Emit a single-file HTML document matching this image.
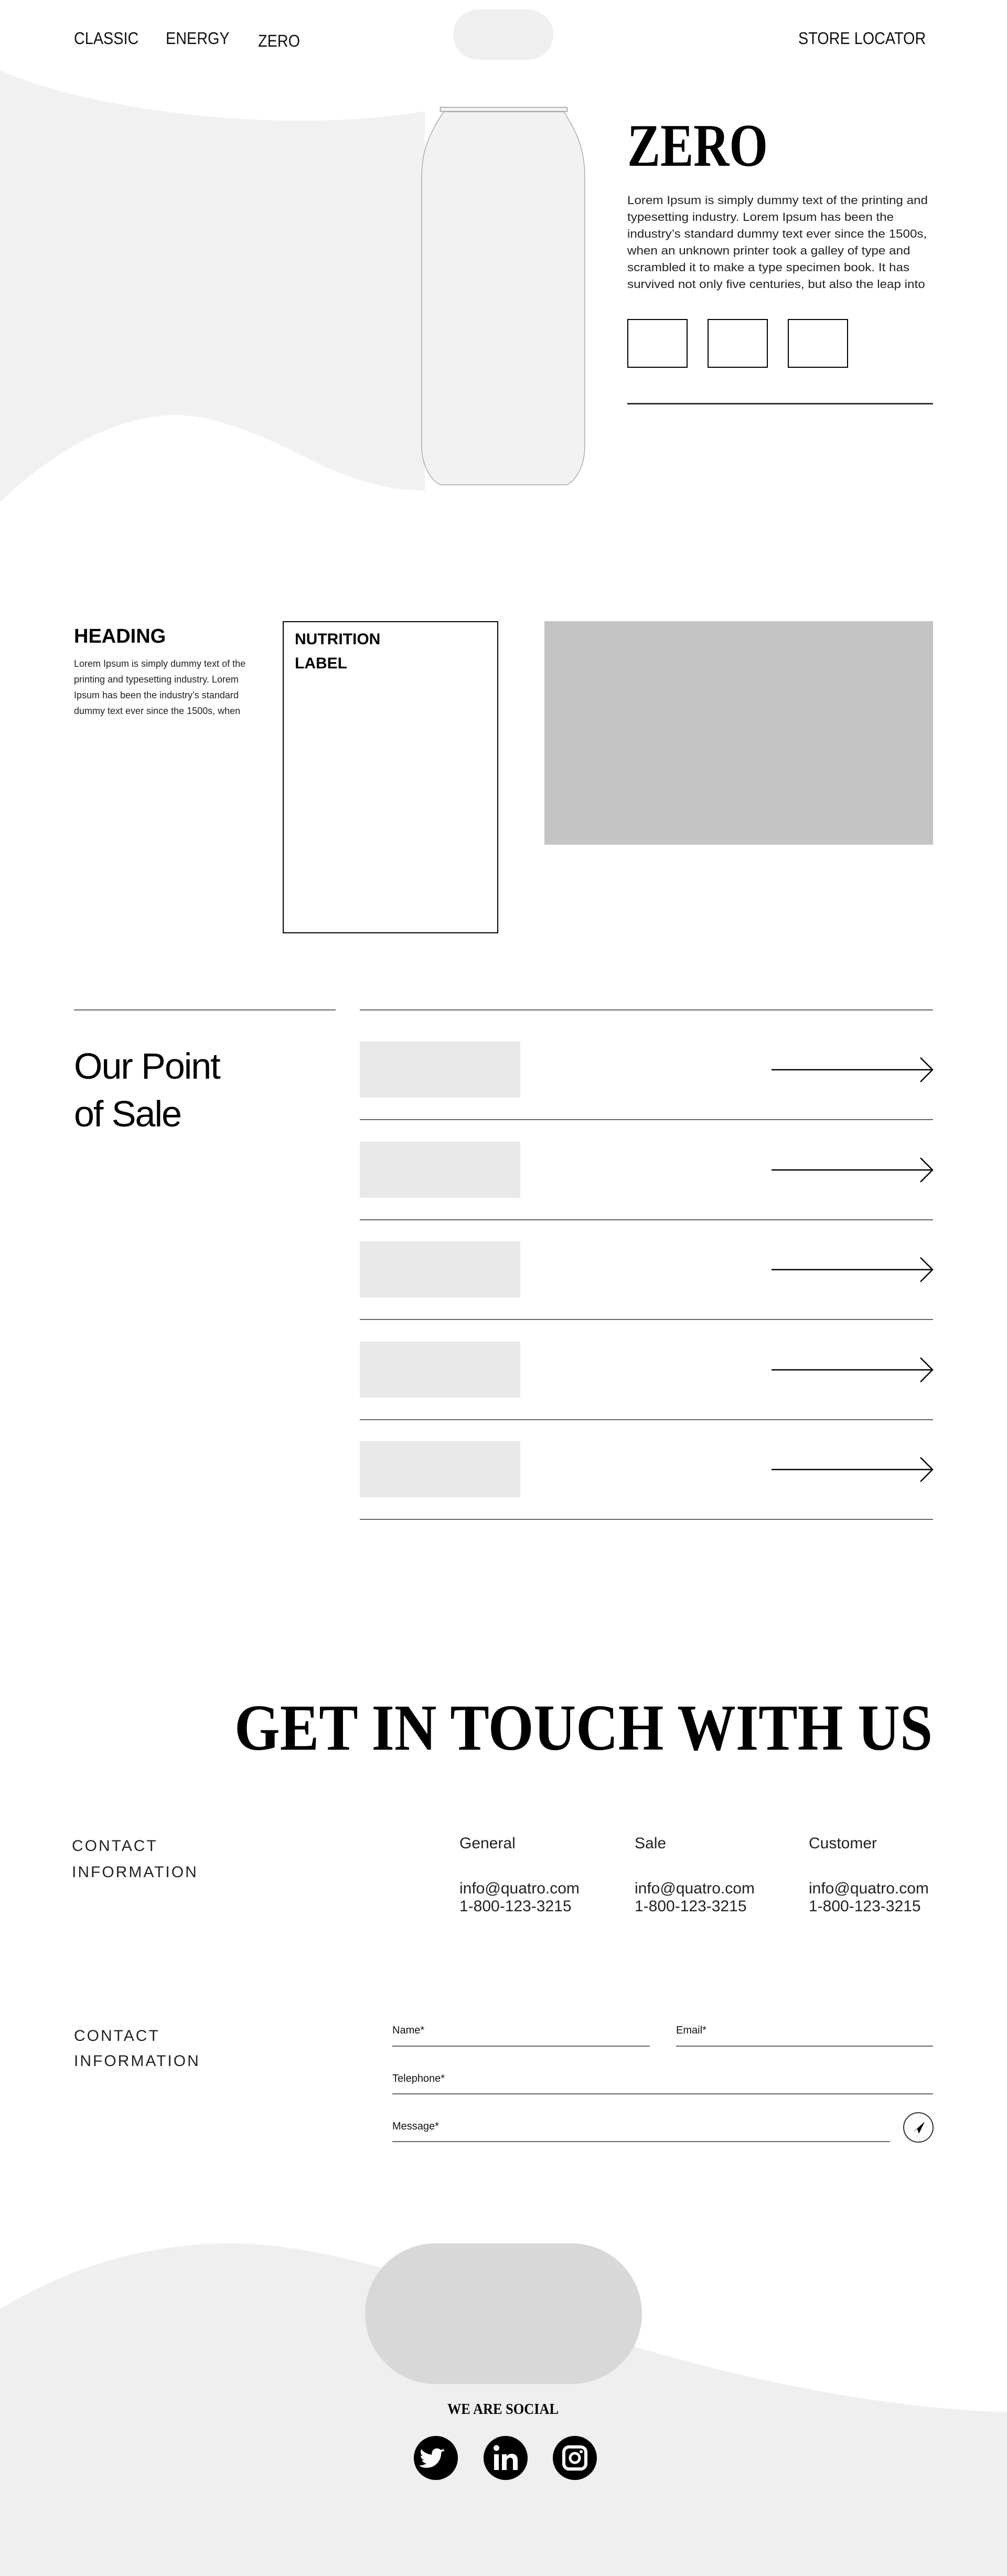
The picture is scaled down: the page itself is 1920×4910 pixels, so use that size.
<!DOCTYPE html>
<html><head><meta charset="utf-8">
<style>
*{margin:0;padding:0;box-sizing:border-box}
body{width:1920px;height:4910px;position:relative;background:#fff;font-family:"Liberation Sans",sans-serif;color:#000;overflow:hidden}
.a{position:absolute;white-space:nowrap}
.nav{font-size:32px;line-height:1;transform:scaleX(.9);transform-origin:left top;font-weight:300;color:#111}
.ln{position:absolute;background:#666;height:2px}
.gbox{position:absolute;background:#e9e9e9;width:306px;height:107px;left:686px}
.arrow{position:absolute;left:1471px;width:310px;height:50px}
.ci{font-size:30px;line-height:50px;color:#222;letter-spacing:3px}
.col{font-size:30px;color:#222}
.lab{font-size:20px;line-height:1;color:#111}
</style></head><body>

<svg class="a" style="left:0;top:0" width="1920" height="1100">
<path d="M0,134 C150,200 400,232 590,230 C690,229 760,220 810,212 L810,935 C760,935 700,925 620,890 C520,840 420,790 330,791 C200,795 80,880 0,957 Z" fill="#f1f1f1"/>
<rect x="864" y="18" width="191" height="96" rx="48" fill="#efefef"/>
<rect x="839.5" y="204.5" width="242" height="8" fill="#f2f2f2" stroke="#999" stroke-width="1.5"/>
<path d="M846,213 C815,260 804,290 804,340 L804,850 C804,885 820,915 840,924 L1081,924 C1100,915 1115,885 1115,850 L1115,340 C1115,290 1105,260 1075,213 Z" fill="#f2f2f2" stroke="#999" stroke-width="1.2"/>
<text x="1196" y="316" font-family="Liberation Serif" font-weight="bold" font-size="115" textLength="268" lengthAdjust="spacingAndGlyphs">ZERO</text>
<rect x="1197" y="609" width="113" height="91" fill="none" stroke="#000" stroke-width="2"/>
<rect x="1350" y="609" width="113" height="91" fill="none" stroke="#000" stroke-width="2"/>
<rect x="1503" y="609" width="113" height="91" fill="none" stroke="#000" stroke-width="2"/>
<rect x="1196" y="768" width="583" height="3" fill="#333"/>
</svg>

<div class="a nav" style="left:141px;top:57px">CLASSIC</div>
<div class="a nav" style="left:316px;top:57px">ENERGY</div>
<div class="a nav" style="left:492px;top:62px">ZERO</div>
<div class="a nav" style="left:1522px;top:57px">STORE LOCATOR</div>

<div class="a" style="left:1196px;top:366px;font-size:22px;line-height:32px;color:#222;transform:scaleX(1.1);transform-origin:left top">Lorem Ipsum is simply dummy text of the printing and<br>typesetting industry. Lorem Ipsum has been the<br>industry’s standard dummy text ever since the 1500s,<br>when an unknown printer took a galley of type and<br>scrambled it to make a type specimen book. It has<br>survived not only five centuries, but also the leap into</div>

<div class="a" style="left:141px;top:1194px;font-size:38px;line-height:1;font-weight:bold">HEADING</div>
<div class="a" style="left:141px;top:1250px;font-size:18px;line-height:30px;color:#222">Lorem Ipsum is simply dummy text of the<br>printing and typesetting industry. Lorem<br>Ipsum has been the industry’s standard<br>dummy text ever since the 1500s, when</div>
<div class="a" style="left:539px;top:1184px;width:411px;height:595px;border:2px solid #000"></div>
<div class="a" style="left:562px;top:1196px;font-size:30px;line-height:46px;font-weight:bold">NUTRITION<br>LABEL</div>
<div class="a" style="left:1038px;top:1184px;width:741px;height:426px;background:#c4c4c4"></div>

<div class="ln" style="left:141px;top:1924px;width:499px"></div>
<div class="ln" style="left:686px;top:1924px;width:1093px"></div>
<div class="a" style="left:141px;top:1987px;font-size:70px;line-height:91px;letter-spacing:-2px">Our Point<br>of Sale</div>

<div class="gbox" style="top:1985px"></div>
<div class="gbox" style="top:2176px"></div>
<div class="gbox" style="top:2366px"></div>
<div class="gbox" style="top:2557px"></div>
<div class="gbox" style="top:2747px"></div>
<div class="ln" style="left:686px;top:2133px;width:1093px"></div>
<div class="ln" style="left:686px;top:2324px;width:1093px"></div>
<div class="ln" style="left:686px;top:2514px;width:1093px"></div>
<div class="ln" style="left:686px;top:2705px;width:1093px"></div>
<div class="ln" style="left:686px;top:2895px;width:1093px"></div>
<svg class="arrow" style="top:2014px" viewBox="0 0 310 50"><path d="M0,25 H306 M284,2 L307,25 L284,48" fill="none" stroke="#000" stroke-width="2.5"/></svg>
<svg class="arrow" style="top:2205px" viewBox="0 0 310 50"><path d="M0,25 H306 M284,2 L307,25 L284,48" fill="none" stroke="#000" stroke-width="2.5"/></svg>
<svg class="arrow" style="top:2395px" viewBox="0 0 310 50"><path d="M0,25 H306 M284,2 L307,25 L284,48" fill="none" stroke="#000" stroke-width="2.5"/></svg>
<svg class="arrow" style="top:2586px" viewBox="0 0 310 50"><path d="M0,25 H306 M284,2 L307,25 L284,48" fill="none" stroke="#000" stroke-width="2.5"/></svg>
<svg class="arrow" style="top:2776px" viewBox="0 0 310 50"><path d="M0,25 H306 M284,2 L307,25 L284,48" fill="none" stroke="#000" stroke-width="2.5"/></svg>

<svg class="a" style="left:0;top:3150px" width="1920" height="1760">
<path d="M0,1251 C150,1160 300,1126 441,1126 C650,1126 900,1230 1200,1320 C1450,1395 1700,1440 1920,1448 L1920,1760 L0,1760 Z" fill="#efefef"/>
<rect x="696" y="1126" width="528" height="268" rx="134" fill="#d8d8d8"/>
<text x="1778" y="185" text-anchor="end" font-family="Liberation Serif" font-weight="bold" font-size="125" textLength="1331" lengthAdjust="spacingAndGlyphs">GET IN TOUCH WITH US</text>
<text x="959" y="1451" text-anchor="middle" font-family="Liberation Serif" font-weight="bold" font-size="28" textLength="212" lengthAdjust="spacingAndGlyphs">WE ARE SOCIAL</text>
<circle cx="831" cy="1535" r="42" fill="#000"/>
<path d="M858,1513 c-3,1.5 -6,2.3 -9,2.7 c3.3,-2 5.8,-5.2 7,-9 c-3,1.8 -6.5,3.1 -10,3.8 c-2.9,-3.1 -7,-5 -11.5,-5 c-8.7,0 -15.8,7.1 -15.8,15.8 c0,1.2 .1,2.4 .4,3.6 c-13.1,-.7 -24.8,-7 -32.6,-16.5 c-1.4,2.3 -2.1,5 -2.1,7.9 c0,5.5 2.8,10.3 7,13.1 c-2.6,-.1 -5,-.8 -7.1,-2 c0,6.9 4.8,12.6 11.3,13.9 c-2.1,.6 -4.5,.7 -7.1,.3 c1.8,5.7 7.1,9.8 13.3,9.9 c-6.7,5.2 -15.3,7.6 -23.4,6.6 c7,4.5 15.3,7.1 24.2,7.1 c29,0 44.9,-24 44.9,-44.9 l0,-2 c3.1,-2.2 5.7,-5 7.8,-8.1 z" fill="#fff" transform="translate(831,1535) scale(.62) translate(-831,-1535)"/>
<circle cx="964" cy="1535" r="42" fill="#000"/>
<rect x="942" y="1528" width="9" height="30" fill="#fff"/>
<circle cx="946.5" cy="1516" r="5.5" fill="#fff"/>
<path d="M957,1528 h9 v4 c2,-3 5.5,-5 10,-5 c7,0 11,4.5 11,12.5 v18.5 h-9 v-17 c0,-4 -1.6,-6.5 -5,-6.5 c-3.6,0 -7,2.5 -7,7 v16.5 h-9 z" fill="#fff"/>
<circle cx="1096" cy="1535" r="42" fill="#000"/>
<rect x="1075" y="1514" width="42" height="42" rx="10" fill="none" stroke="#fff" stroke-width="6"/>
<circle cx="1096" cy="1535" r="9" fill="none" stroke="#fff" stroke-width="5"/>
<circle cx="1108" cy="1523" r="3" fill="#fff"/>
<circle cx="1751" cy="905" r="28" fill="none" stroke="#333" stroke-width="2"/>
<path d="M1740,915 L1763,894 L1752,917 L1749,908 Z" fill="#000"/>
</svg>

<div class="a ci" style="left:137px;top:3494px">CONTACT<br>INFORMATION</div>
<div class="a col" style="left:876px;top:3499px;line-height:1">General</div>
<div class="a col" style="left:1210px;top:3499px;line-height:1">Sale</div>
<div class="a col" style="left:1542px;top:3499px;line-height:1">Customer</div>
<div class="a col" style="left:876px;top:3583px;line-height:34px">info@quatro.com<br>1-800-123-3215</div>
<div class="a col" style="left:1210px;top:3583px;line-height:34px">info@quatro.com<br>1-800-123-3215</div>
<div class="a col" style="left:1542px;top:3583px;line-height:34px">info@quatro.com<br>1-800-123-3215</div>

<div class="a ci" style="left:141px;top:3857px;line-height:48px">CONTACT<br>INFORMATION</div>
<div class="a lab" style="left:748px;top:3860px">Name*</div>
<div class="a lab" style="left:1289px;top:3860px">Email*</div>
<div class="a lab" style="left:748px;top:3952px">Telephone*</div>
<div class="a lab" style="left:748px;top:4043px">Message*</div>
<div class="ln" style="left:748px;top:3899px;width:491px"></div>
<div class="ln" style="left:1289px;top:3899px;width:490px"></div>
<div class="ln" style="left:748px;top:3990px;width:1031px"></div>
<div class="ln" style="left:748px;top:4081px;width:949px"></div>

</body></html>
